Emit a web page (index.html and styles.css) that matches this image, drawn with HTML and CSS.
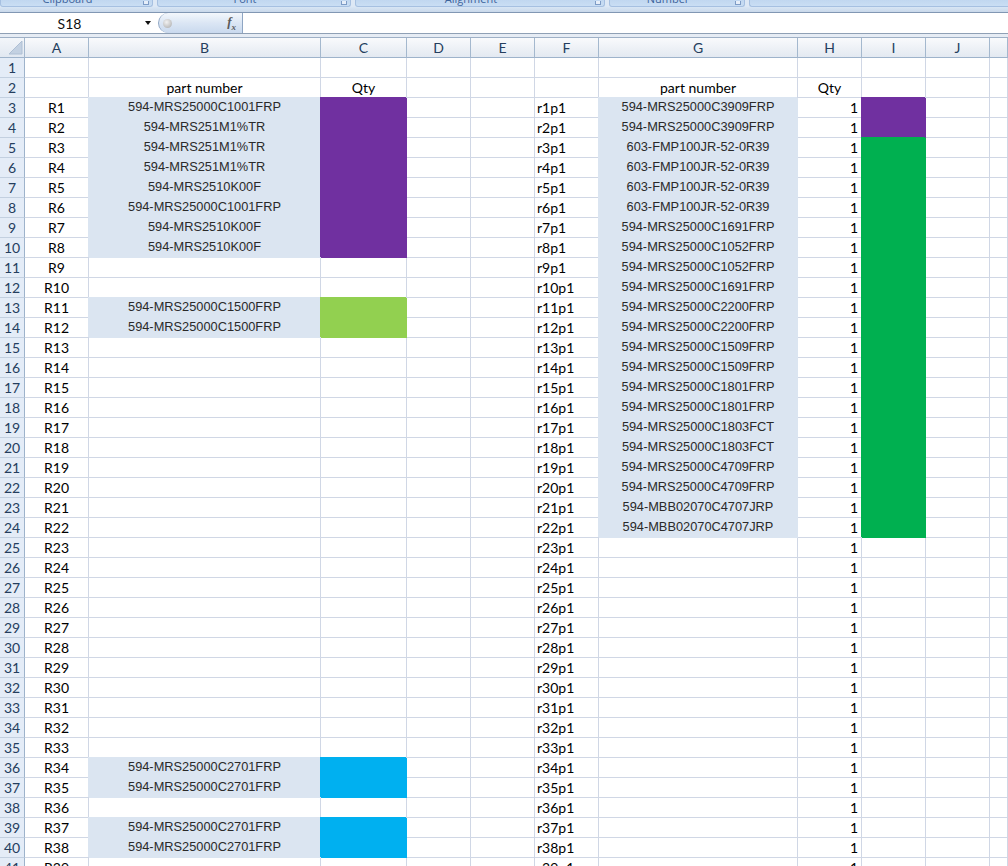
FILE: index.html
```html
<!DOCTYPE html>
<html lang="en">
<head>
    <meta charset="UTF-8">
    <title>Parts sheet</title>
    <link rel="stylesheet" href="styles.css">
</head>
<body>

<!-- Ribbon group labels (cut off at the top) -->
<div class="ribbon">
    <div class="group g-clipboard"><span class="label">Clipboard</span><span class="launcher"></span></div>
    <div class="group g-font"><span class="label">Font</span><span class="launcher"></span></div>
    <div class="group g-align"><span class="label">Alignment</span><span class="launcher"></span></div>
    <div class="group g-number"><span class="label">Number</span><span class="launcher"></span></div>
    <div class="group g-rest"></div>
</div>

<!-- Formula bar -->
<div class="formula-bar">
    <div class="name-box">
        <span class="name">S18</span>
        <span class="arrow"></span>
    </div>
    <div class="fx-btn">
        <span class="ball"></span>
        <span class="fx">f<sub>x</sub></span>
    </div>
    <div class="formula-input"></div>
</div>

<div class="sheet-gap"></div>

<div class="sheet" id="sheet"></div>

<script>
    const sheet = document.getElementById('sheet');

    const leftParts = {
        3: '594-MRS25000C1001FRP',
        4: '594-MRS251M1%TR',
        5: '594-MRS251M1%TR',
        6: '594-MRS251M1%TR',
        7: '594-MRS2510K00F',
        8: '594-MRS25000C1001FRP',
        9: '594-MRS2510K00F',
        10: '594-MRS2510K00F',
        13: '594-MRS25000C1500FRP',
        14: '594-MRS25000C1500FRP',
        36: '594-MRS25000C2701FRP',
        37: '594-MRS25000C2701FRP',
        39: '594-MRS25000C2701FRP',
        40: '594-MRS25000C2701FRP'
    };

    // column G, rows 3 to 24
    const rightParts = [
        '594-MRS25000C3909FRP', '594-MRS25000C3909FRP',
        '603-FMP100JR-52-0R39', '603-FMP100JR-52-0R39',
        '603-FMP100JR-52-0R39', '603-FMP100JR-52-0R39',
        '594-MRS25000C1691FRP', '594-MRS25000C1052FRP',
        '594-MRS25000C1052FRP', '594-MRS25000C1691FRP',
        '594-MRS25000C2200FRP', '594-MRS25000C2200FRP',
        '594-MRS25000C1509FRP', '594-MRS25000C1509FRP',
        '594-MRS25000C1801FRP', '594-MRS25000C1801FRP',
        '594-MRS25000C1803FCT', '594-MRS25000C1803FCT',
        '594-MRS25000C4709FRP', '594-MRS25000C4709FRP',
        '594-MBB02070C4707JRP', '594-MBB02070C4707JRP'
    ];

    function cell(text, cls) {
        let div = document.createElement('div');
        div.className = 'cell ' + cls;
        div.textContent = text;
        sheet.appendChild(div);
        return div;
    }

    // header row
    let corner = cell('', 'corner');
    corner.innerHTML = '<svg width="24" height="19" viewBox="0 0 24 19"><polygon points="22,3 22,16 9,16" fill="#c3d1e2" stroke="#aebfd4" stroke-width="1"/></svg>';
    ['A', 'B', 'C', 'D', 'E', 'F', 'G', 'H', 'I', 'J', ''].forEach(letter => cell(letter, 'colhead'));

    for (let row = 1; row <= 41; row++) {
        cell(row, 'rowhead');

        // A
        cell(row >= 3 ? 'R' + (row - 2) : '', 'center');

        // B and C
        if (row === 2) {
            cell('part number', 'center');
            cell('Qty', 'center');
        } else if (leftParts[row]) {
            cell(leftParts[row], 'part fill-pale');
            let fill = row <= 10 ? 'fill-purple' : row <= 14 ? 'fill-lime' : 'fill-sky';
            cell('', fill);
        } else {
            cell('', '');
            cell('', '');
        }

        // D, E
        cell('', '');
        cell('', '');

        // F
        cell(row >= 3 ? 'r' + (row - 2) + 'p1' : '', 'left');

        // G
        if (row === 2) {
            cell('part number', 'center');
        } else if (row >= 3 && row <= 24) {
            cell(rightParts[row - 3], 'part fill-pale');
        } else {
            cell('', '');
        }

        // H
        if (row === 2) {
            cell('Qty', 'center');
        } else {
            cell(row >= 3 ? '1' : '', 'right');
        }

        // I
        if (row === 3 || row === 4) {
            cell('', 'fill-purple');
        } else if (row >= 5 && row <= 24) {
            cell('', 'fill-green');
        } else {
            cell('', '');
        }

        // J, K
        cell('', '');
        cell('', '');
    }
</script>

</body>
</html>
```

FILE: styles.css
```css
body {
    margin: 0;
    width: 1008px;
    height: 866px;
    overflow: hidden;
    background-color: #fff;
    font-family: Lato, "Liberation Sans", sans-serif;
}

/* ---- ribbon ---- */

.ribbon {
    display: flex;
    gap: 4px;
    height: 12px;
    background: linear-gradient(#dde8f5 0, #dde8f5 7px, #d8e6f5 7px, #c9d8ea 12px);
    border-bottom: 1px solid #8197b3;
}

.group {
    position: relative;
    box-sizing: border-box;
    height: 7px;
    padding-right: 18px;
    overflow: hidden;
    background: linear-gradient(#c1d7f0, #cadef4);
    border: 1px solid #a6c0e1;
    border-top: none;
    border-radius: 0 0 3px 3px;
    text-align: center;
}

.g-clipboard { width: 153px; }
.g-font { width: 194px; }
.g-align { width: 250px; }
.g-number { width: 136px; }
.g-rest { flex: 1; margin-right: -4px; border-right: none; }

.label {
    display: block;
    margin-top: -7px;
    font-family: "Open Sans", "Liberation Sans", sans-serif;
    font-size: 11px;
    line-height: 12px;
    color: #3d639b;
}

.launcher {
    position: absolute;
    right: 3px;
    bottom: 1px;
    width: 4px;
    height: 3px;
    border: 1px solid #7e9cc6;
    border-top: none;
    background-color: #e6eef9;
}

/* ---- formula bar ---- */

.formula-bar {
    display: flex;
    height: 20px;
    background-color: #fff;
    border-bottom: 1px solid #8fa0b5;
}

.name-box {
    display: flex;
    align-items: center;
    width: 158px;
}

.name {
    width: 139px;
    text-align: center;
    font-size: 14px;
    color: #111;
}

.arrow {
    width: 0;
    height: 0;
    margin-left: 6px;
    border-left: 3px solid transparent;
    border-right: 3px solid transparent;
    border-top: 4px solid #111;
}

.fx-btn {
    display: flex;
    align-items: center;
    justify-content: space-between;
    box-sizing: border-box;
    width: 85px;
    padding: 0 6px 0 4px;
    background: linear-gradient(#f3f7fc, #dbe6f4 50%, #c9d9ee);
    border-left: 1px solid #8ea5c3;
    border-right: 1px solid #8ea5c3;
    border-radius: 10px 0 0 10px;
}

.ball {
    width: 9px;
    height: 9px;
    border-radius: 50%;
    background: radial-gradient(circle at 40% 35%, #f2f2f2, #a8a8a8);
}

.fx {
    font-family: "Liberation Serif", serif;
    font-style: italic;
    font-weight: bold;
    font-size: 13px;
    color: #5a5a5a;
}

.fx sub {
    font-size: 9px;
}

.formula-input {
    flex: 1;
}

.sheet-gap {
    height: 3px;
    background-color: #e6ecf4;
    border-bottom: 1px solid #9eb0c6;
}

/* ---- grid ---- */

.sheet {
    display: grid;
    grid-template-columns: 25px 64px 232px 86px 64px 64px 64px 199px 64px 64px 64px 1fr;
    grid-auto-rows: 20px;
}

.cell {
    box-sizing: border-box;
    padding: 0 2px;
    border-right: 1px solid #d0d7e5;
    border-bottom: 1px solid #d0d7e5;
    font-size: 14px;
    line-height: 19px;
    color: #000;
    white-space: nowrap;
    overflow: hidden;
}

.colhead {
    background: linear-gradient(#f9fafc, #e3e9f1);
    border-right-color: #a4b8ce;
    border-bottom-color: #9eb3cb;
    text-align: center;
    color: #253e5e;
}

.corner {
    padding: 0;
    background: linear-gradient(#f3f6fa, #e1e8f1);
    border-right-color: #a4b8ce;
    border-bottom-color: #9eb3cb;
}

.corner svg {
    display: block;
}

.rowhead {
    background-color: #e4ecf7;
    border-right-color: #9eb3cb;
    border-bottom-color: #c3d0e0;
    text-align: center;
    color: #253e5e;
}

.center {
    text-align: center;
}

.left {
    padding-left: 2px;
}

.right {
    text-align: right;
    padding-right: 3px;
}

.part {
    font-family: "Liberation Sans", Arial, sans-serif;
    font-size: 12.8px;
    line-height: 17px;
    color: #2a2a2a;
    text-align: center;
}

/* fills hide the grid lines round the cell */
.fill-pale {
    background-color: #dbe5f1;
    border-color: #dbe5f1;
    box-shadow: -1px -1px 0 #dbe5f1;
}

.fill-purple {
    background-color: #7030a0;
    border-color: #7030a0;
    box-shadow: -1px -1px 0 #7030a0;
}

.fill-lime {
    background-color: #92d050;
    border-color: #92d050;
    box-shadow: -1px -1px 0 #92d050;
}

.fill-green {
    background-color: #00b050;
    border-color: #00b050;
    box-shadow: -1px -1px 0 #00b050;
}

.fill-sky {
    background-color: #00b0f0;
    border-color: #00b0f0;
    box-shadow: -1px -1px 0 #00b0f0;
}
```
